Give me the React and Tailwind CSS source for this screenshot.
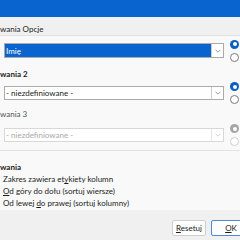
import React from "react";

const Chevron = ({ color = "#6b6b6b" }) => (
  <svg width="6" height="4" viewBox="0 0 6 4" fill="none">
    <path d="M0.6 0.8 L3 3.2 L5.4 0.8" stroke={color} strokeWidth="0.8" />
  </svg>
);

const Radio = ({ checked, disabled }) => {
  if (checked) {
    return (
      <div
        className={`w-[9px] h-[9px] rounded-full flex items-center justify-center ${
          disabled ? "bg-[#a6a6a6]" : "bg-[#0a5fc4]"
        }`}
      >
        <div className="w-[4px] h-[4px] rounded-full bg-white" />
      </div>
    );
  }
  return (
    <div
      className={`w-[9px] h-[9px] rounded-full border bg-white ${
        disabled ? "border-[#cfcfcf]" : "border-[#7a7a7a]"
      }`}
    />
  );
};

const SelectRow = ({ value, highlighted, disabled, checked, h }) => (
  <div className={`shrink-0 flex items-center ${h}`}>
    <div
      className={`ml-[4px] w-[220px] h-full flex border bg-white ${
        disabled ? "border-[#d8d8d8]" : "border-[#ababab]"
      }`}
    >
      <div
        className={`flex-1 flex items-center pl-[1px] ${
          highlighted
            ? "bg-[#0a64cf] text-white"
            : disabled
            ? "text-[#a8a8a8]"
            : "text-[#1b1b1b]"
        }`}
      >
        {value}
      </div>
      <div
        className={`w-[12px] flex items-center justify-center border-l ${
          disabled ? "border-[#e4e4e4]" : "border-[#cccccc]"
        }`}
      >
        <Chevron color={disabled ? "#c4c4c4" : "#808080"} />
      </div>
    </div>
    <div className="ml-[6px] flex flex-col gap-[4px]">
      <Radio checked={checked} disabled={disabled} />
      <Radio disabled={disabled} />
    </div>
  </div>
);

const App = () => {
  return (
    <div
      className="w-[240px] h-[240px] overflow-hidden bg-[#f9f9f9] text-[8px] text-[#1b1b1b] flex flex-col"
      style={{ fontFamily: 'Lato, "Open Sans", sans-serif' }}
    >
      <div className="shrink-0 h-[17px] bg-[#0a64cf]" />
      <div className="shrink-0 h-[19px] bg-[#f0f0f0] border-b border-[#e2e2e2] flex items-center pt-[5px]">
        <span>wania Opcje</span>
      </div>

      <div className="shrink-0 h-[7px]" />
      <SelectRow value="Imię" highlighted checked h="h-[15px]" />

      <div className="shrink-0 mt-[10px] h-[12px] leading-[12px] font-bold">wania 2</div>
      <div className="shrink-0 h-[6px]" />
      <SelectRow value="- niezdefiniowane -" checked h="h-[14px]" />

      <div className="shrink-0 mt-[8px] h-[12px] leading-[12px] text-[#555]">wania 3</div>
      <div className="shrink-0 h-[8px]" />
      <SelectRow value="- niezdefiniowane -" disabled checked h="h-[14px]" />

      <div className="shrink-0 mt-[8px] h-px bg-[#e2e2e2]" />
      <div className="shrink-0 mt-[10px] h-[12px] leading-[12px] font-bold">wania</div>
      <div className="shrink-0 pl-[3px] flex flex-col leading-[12px]">
        <span>
          Zakres zawiera et<u>y</u>kiety kolumn
        </span>
        <span>
          <u>O</u>d góry do dołu (sortuj wiersze)
        </span>
        <span>
          Od lewej <u>d</u>o prawej (sortuj kolumny)
        </span>
      </div>

      <div className="shrink-0 mt-[1px] h-[30px] bg-[#f0f0f0] flex items-start justify-end gap-[5px] pt-[10px]">
        <div className="w-[34px] h-[16px] bg-[#fdfdfd] border border-[#d0d0d0] rounded-[2px] flex items-center justify-center">
          <span>
            <u>R</u>esetuj
          </span>
        </div>
        <div className="w-[40px] -mr-[11px] h-[16px] bg-[#fdfdfd] border border-[#4a8ad6] rounded-[2px] flex items-center justify-center">
          <span>
            <u>O</u>K
          </span>
        </div>
      </div>
    </div>
  );
};

export default App;
